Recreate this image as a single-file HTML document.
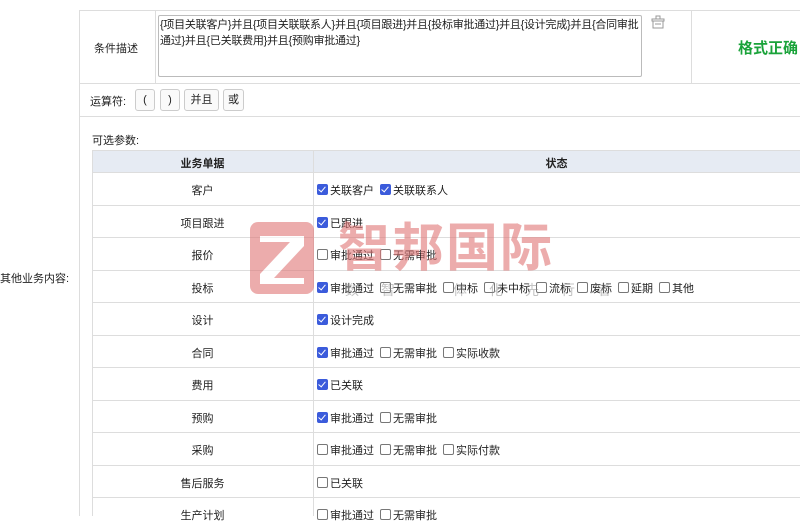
<!DOCTYPE html>
<html><head><meta charset="utf-8"><style>
body{margin:0;width:800px;height:516px;overflow:hidden;background:#fff;font-family:"Liberation Sans","Noto Sans CJK SC",sans-serif;font-size:11px;color:#222;position:relative}
.a{position:absolute}
.hl{position:absolute;height:1px;background:#ddd}
.vl{position:absolute;width:1px;background:#ddd}
.cb{display:inline-block;width:9px;height:9px;border:1px solid #777;border-radius:2px;vertical-align:-1px;margin-right:2px;background:#fff;position:relative}
.cb.on{background:#3b5bdb;border-color:#3b5bdb}
.cb.on:after{content:"";position:absolute;left:2px;top:0px;width:3px;height:6px;border:solid #fff;border-width:0 1.5px 1.5px 0;transform:rotate(40deg)}
.it{margin-right:6px;white-space:nowrap}
.btn{position:absolute;top:89px;height:20px;border:1px solid #ccc;border-radius:3px;background:#fafafa;font-size:11px;line-height:20px;text-align:center}
.lbl{position:absolute;left:92px;width:221px;text-align:center}
.st{position:absolute;left:317px;white-space:nowrap}
</style></head><body>
<div class="hl" style="left:79px;top:10px;width:721px"></div>
<div class="hl" style="left:79px;top:83px;width:721px"></div>
<div class="hl" style="left:79px;top:116px;width:721px"></div>
<div class="vl" style="left:79px;top:10px;height:506px"></div>
<div class="vl" style="left:155px;top:10px;height:73px"></div>
<div class="vl" style="left:691px;top:10px;height:73px"></div>
<div class="a" style="left:94px;top:40px">条件描述</div>
<div class="a" style="left:158px;top:15px;width:484px;height:62px;border:1px solid #bbb;border-radius:2px;padding:1px 1px;font-size:11px;letter-spacing:-0.25px;line-height:16px;box-sizing:border-box">{项目关联客户}并且{项目关联联系人}并且{项目跟进}并且{投标审批通过}并且{设计完成}并且{合同审批通过}并且{已关联费用}并且{预购审批通过}</div>
<svg class="a" style="left:651px;top:15px" width="14" height="14" viewBox="0 0 14 14" fill="none" stroke="#999" stroke-width="1"><path d="M5 1h4v3H5zM1 4h12v2H1zM2 6v7h10V6M4 9h6"/></svg>
<div class="a" style="left:738px;top:37px;color:#1aa33a;font-size:15px;font-weight:bold">格式正确</div>
<div class="a" style="left:90px;top:93px">运算符:</div>
<div class="btn" style="left:135px;width:18px">(</div>
<div class="btn" style="left:160px;width:18px">)</div>
<div class="btn" style="left:184px;width:33px">并且</div>
<div class="btn" style="left:223px;width:19px">或</div>
<div class="a" style="left:92px;top:132px">可选参数:</div>
<div class="a" style="left:0;top:270px">其他业务内容:</div>
<div class="a" style="left:92px;top:150px;width:708px;height:22px;background:#e6ebf3"></div>
<div class="vl" style="left:92px;top:150px;height:366px"></div>
<div class="vl" style="left:313px;top:150px;height:366px"></div>
<div class="hl" style="left:92px;top:150px;width:708px"></div>
<div class="hl" style="left:92px;top:172px;width:708px"></div>
<div class="hl" style="left:92px;top:205px;width:708px"></div>
<div class="hl" style="left:92px;top:237px;width:708px"></div>
<div class="hl" style="left:92px;top:270px;width:708px"></div>
<div class="hl" style="left:92px;top:302px;width:708px"></div>
<div class="hl" style="left:92px;top:335px;width:708px"></div>
<div class="hl" style="left:92px;top:367px;width:708px"></div>
<div class="hl" style="left:92px;top:400px;width:708px"></div>
<div class="hl" style="left:92px;top:432px;width:708px"></div>
<div class="hl" style="left:92px;top:465px;width:708px"></div>
<div class="hl" style="left:92px;top:497px;width:708px"></div>
<div class="lbl" style="top:155px;font-weight:bold">业务单据</div>
<div class="a" style="left:313px;width:487px;top:155px;text-align:center;font-weight:bold">状态</div>
<div class="lbl" style="top:182px">客户</div><div class="st" style="top:182px"><span class="it"><i class="cb on"></i>关联客户</span><span class="it"><i class="cb on"></i>关联联系人</span></div>
<div class="lbl" style="top:215px">项目跟进</div><div class="st" style="top:215px"><span class="it"><i class="cb on"></i>已跟进</span></div>
<div class="lbl" style="top:247px">报价</div><div class="st" style="top:247px"><span class="it"><i class="cb"></i>审批通过</span><span class="it"><i class="cb"></i>无需审批</span></div>
<div class="lbl" style="top:280px">投标</div><div class="st" style="top:280px"><span class="it"><i class="cb on"></i>审批通过</span><span class="it"><i class="cb"></i>无需审批</span><span class="it"><i class="cb"></i>中标</span><span class="it"><i class="cb"></i>未中标</span><span class="it"><i class="cb"></i>流标</span><span class="it"><i class="cb"></i>废标</span><span class="it"><i class="cb"></i>延期</span><span class="it"><i class="cb"></i>其他</span></div>
<div class="lbl" style="top:312px">设计</div><div class="st" style="top:312px"><span class="it"><i class="cb on"></i>设计完成</span></div>
<div class="lbl" style="top:345px">合同</div><div class="st" style="top:345px"><span class="it"><i class="cb on"></i>审批通过</span><span class="it"><i class="cb"></i>无需审批</span><span class="it"><i class="cb"></i>实际收款</span></div>
<div class="lbl" style="top:377px">费用</div><div class="st" style="top:377px"><span class="it"><i class="cb on"></i>已关联</span></div>
<div class="lbl" style="top:410px">预购</div><div class="st" style="top:410px"><span class="it"><i class="cb on"></i>审批通过</span><span class="it"><i class="cb"></i>无需审批</span></div>
<div class="lbl" style="top:442px">采购</div><div class="st" style="top:442px"><span class="it"><i class="cb"></i>审批通过</span><span class="it"><i class="cb"></i>无需审批</span><span class="it"><i class="cb"></i>实际付款</span></div>
<div class="lbl" style="top:475px">售后服务</div><div class="st" style="top:475px"><span class="it"><i class="cb"></i>已关联</span></div>
<div class="lbl" style="top:507px">生产计划</div><div class="st" style="top:507px"><span class="it"><i class="cb"></i>审批通过</span><span class="it"><i class="cb"></i>无需审批</span></div>
<svg class="a" style="left:250px;top:222px;opacity:.6" width="64" height="72" viewBox="0 0 64 72"><rect x="0" y="0" width="64" height="72" rx="8" fill="#e07676"/><path d="M10 14h44v10L24 56h30v6H10V52l30-32H10z" fill="#fff"/></svg>
<div class="a" style="left:338px;top:214px;font-size:52px;font-weight:bold;color:#e07676;opacity:.6;letter-spacing:2px;line-height:70px">智邦国际</div>
<div class="a" style="left:345px;top:280px;font-size:14px;color:#888;opacity:.5;letter-spacing:22px">数智一体化先行者</div>
</body></html>
